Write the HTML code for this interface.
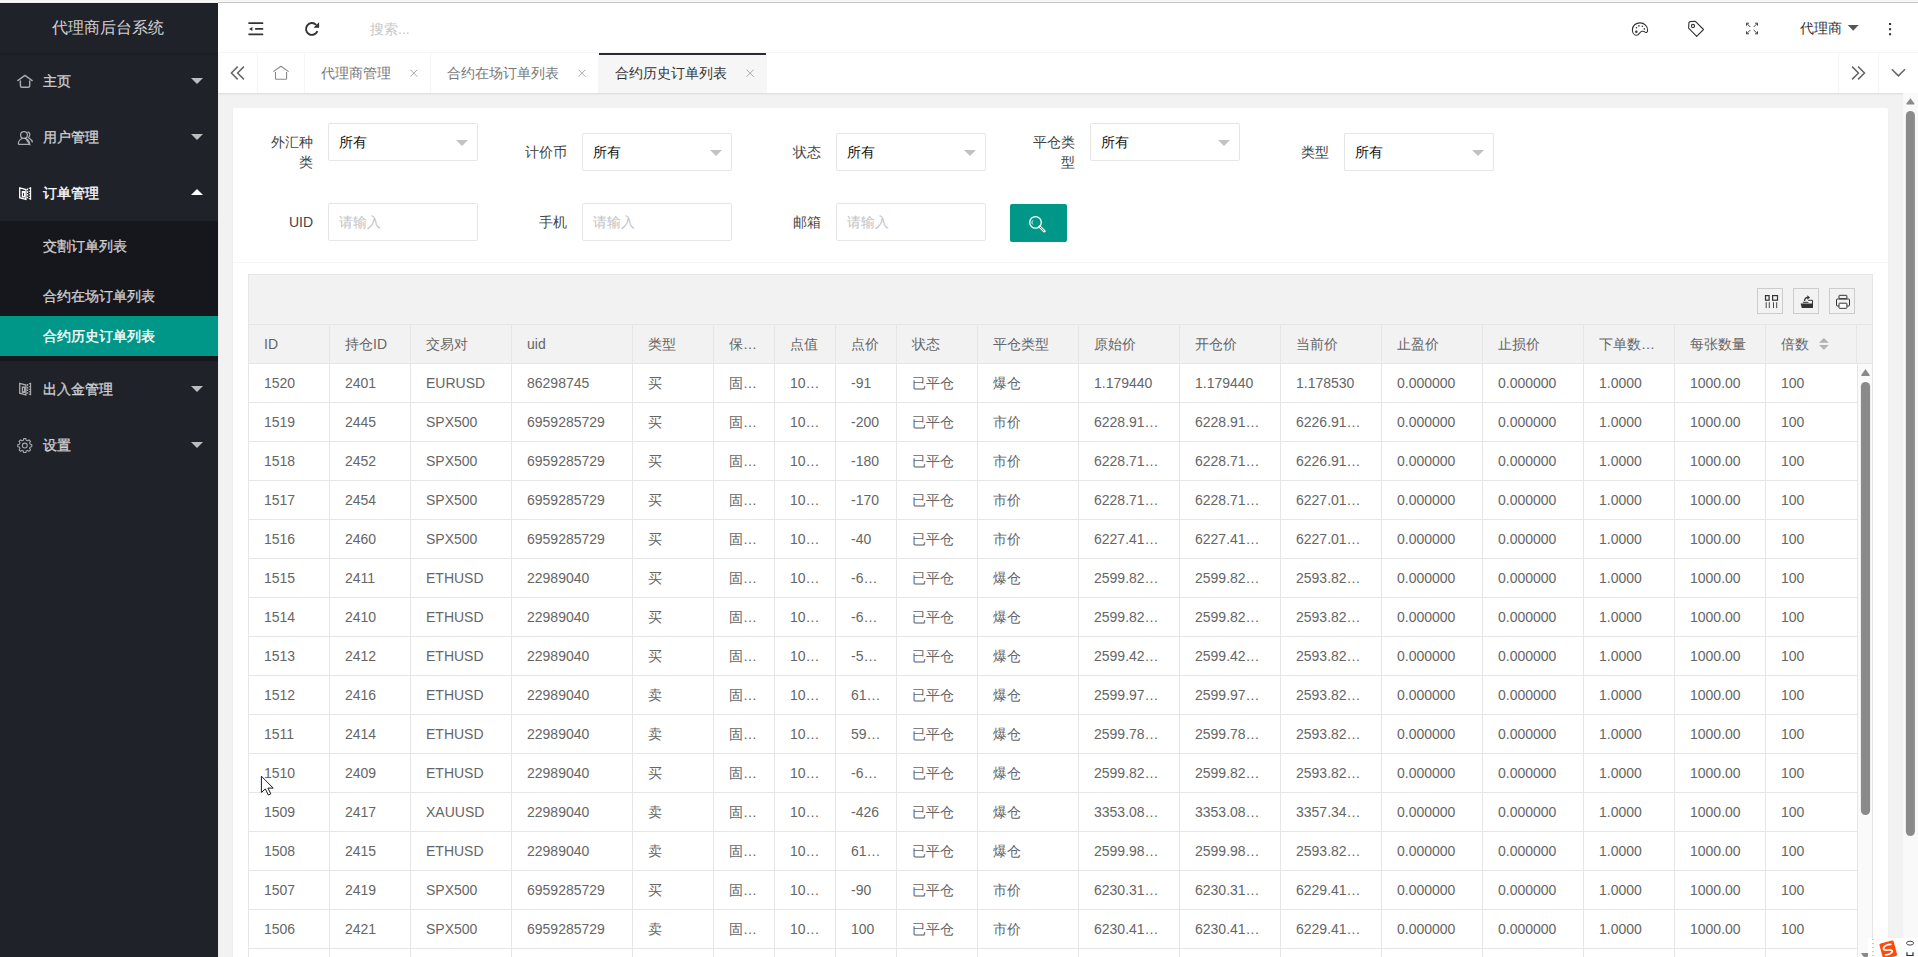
<!DOCTYPE html>
<html><head><meta charset="utf-8"><title>代理商后台系统</title>
<style>
*{box-sizing:border-box;margin:0;padding:0}
html,body{width:1918px;height:957px;overflow:hidden}
body{position:relative;background:#f2f2f2;font-family:"Liberation Sans",sans-serif;font-size:14px;color:#666}
.abs{position:absolute}
#topstrip{position:absolute;left:0;top:0;width:1918px;height:3px;background:linear-gradient(#f5f5f5 0,#f5f5f5 1px,#fafafa 1px,#fafafa 2px,#eee 2px,#eee 3px)}
#topline{position:absolute;left:218px;top:2px;width:1700px;height:1px;background:#c4c4c4}
#side{position:absolute;left:0;top:3px;width:218px;height:954px;background:#20222a;overflow:hidden}
#logo{position:absolute;left:-1px;top:0;width:218px;height:50px;line-height:50px;text-align:center;color:rgba(255,255,255,.8);font-size:16px;box-shadow:0 1px 2px 0 rgba(0,0,0,.15)}
.nav{position:absolute;left:0;width:218px;height:56px;line-height:56px;color:rgba(255,255,255,.7);font-size:14px}
.nav .t{position:absolute;left:43px;top:0;-webkit-text-stroke:.35px currentColor}
.nav.on{color:#fff}
.nav svg{position:absolute}
.caret{position:absolute;right:15px;top:25px;width:0;height:0;border-left:6px solid transparent;border-right:6px solid transparent;border-top:6px solid rgba(255,255,255,.7)}
.caret.upc{border-top:0;border-bottom:6px solid #fff;top:24px}
#sub{position:absolute;left:0;top:218px;width:218px;height:140px;background:rgba(0,0,0,.3)}
.subi{position:absolute;left:0;width:218px;height:40px;line-height:40px;color:rgba(255,255,255,.7)}
.subi .t{position:absolute;left:43px;top:0;-webkit-text-stroke:.35px currentColor}
.subi.sel{background:#009688;color:#fff}
#header{position:absolute;left:218px;top:3px;width:1700px;height:50px;background:#fff;border-bottom:1px solid #f6f6f6}
#tabs{position:absolute;left:218px;top:53px;width:1700px;height:40px;background:#fff;box-shadow:0 1px 2px 0 rgba(0,0,0,.1);z-index:2;color:#777}
.tab{position:absolute;top:0;height:40px;line-height:40px;border-right:1px solid #f6f6f6}
.tab .t{position:absolute;left:16px;top:0}
.tab .x{position:absolute;top:0;color:#999;font-size:14px}
.tab.act{background:#f6f6f6;color:#333}
.tab.act:after{content:"";position:absolute;left:0;top:0;width:100%;height:2px;background:#292b34}
#content{position:absolute;left:218px;top:93px;width:1685px;height:864px;background:#f2f2f2}
#vscroll{position:absolute;left:1903px;top:93px;width:15px;height:864px;background:#f9f9f9}
#card{position:absolute;left:233px;top:108px;width:1655px;height:860px;background:#fff;border-radius:2px;box-shadow:0 1px 2px 0 rgba(0,0,0,.05)}
#cardline{position:absolute;left:233px;top:262px;width:1655px;height:1px;background:#f6f6f6}
.lbl{position:absolute;width:65px;text-align:right;line-height:20px;color:#444}
.slct{position:absolute;width:150px;height:38px;border:1px solid #e6e6e6;background:#fff;border-radius:2px;color:#111;line-height:36px;padding-left:10px}
.slct .arr{position:absolute;right:9px;top:16px;width:0;height:0;border-left:6px solid transparent;border-right:6px solid transparent;border-top:6px solid #c2c2c2}
.inp{position:absolute;width:150px;height:38px;border:1px solid #e6e6e6;background:#fff;border-radius:2px;color:#c2c2c2;line-height:36px;padding-left:10px}
#sbtn{position:absolute;left:1010px;top:204px;width:57px;height:38px;background:#009688;border-radius:2px}
#tbl{position:absolute;left:248px;top:274px;width:1625px;height:700px;border:1px solid #e6e6e6;background:#fff;overflow:hidden}
#tool{position:absolute;left:0;top:0;width:1623px;height:50px;background:#f2f2f2;border-bottom:1px solid #e6e6e6}
.tbtn{position:absolute;top:13px;width:26px;height:26px;border:1px solid #ccc}
#thead{position:absolute;left:0;top:50px;width:1623px;height:39px;background:#f2f2f2;border-bottom:1px solid #e6e6e6}
.th,.td{position:absolute;top:0;height:38px;line-height:38px;border-left:1px solid #e6e6e6}
.th:first-child{border-left:0}
.cell{display:block;padding:0 15px;white-space:nowrap;overflow:hidden;text-overflow:ellipsis}
.th .cell{color:#666}
#tbody{position:absolute;left:0;top:89px;width:1608px;height:700px}
.tr{position:absolute;left:0;width:1608px;height:39px;border-bottom:1px solid #e6e6e6}
.td:first-child{border-left:0}
#tscroll{position:absolute;left:1608px;top:89px;width:15px;height:700px;background:#fafafa;border-left:1px solid #e6e6e6}
#edge{position:absolute;left:218px;top:53px;width:2px;height:904px;background:linear-gradient(to right,rgba(0,0,0,.03),rgba(0,0,0,0));z-index:3}

</style></head><body>
<div id="topstrip"></div><div id="topline"></div>
<div id="side">
  <div id="logo">代理商后台系统</div>
  <div class="nav" style="top:50px"><span class="t">主页</span><i class="caret"></i></div>
  <div class="nav" style="top:106px"><span class="t">用户管理</span><i class="caret"></i></div>
  <div class="nav on" style="top:162px"><span class="t">订单管理</span><i class="caret upc"></i></div>
  <div id="sub">
    <div class="subi" style="top:5px"><span class="t">交割订单列表</span></div>
    <div class="subi" style="top:55px"><span class="t">合约在场订单列表</span></div>
    <div class="subi sel" style="top:95px"><span class="t">合约历史订单列表</span></div>
  </div>
  <div class="nav" style="top:358px"><span class="t">出入金管理</span><i class="caret"></i></div>
  <div class="nav" style="top:414px"><span class="t">设置</span><i class="caret"></i></div>
</div>
<div id="header">
  <span class="abs" style="left:152px;top:14px;color:#c8c8c8;line-height:24px">搜索...</span>
  <span class="abs" style="left:1582px;top:13px;color:#333;line-height:24px">代理商</span>
</div>
<div id="tabs">
  <div class="tab" style="left:0;width:40px"></div>
  <div class="tab" style="left:40px;width:47px"></div>
  <div class="tab" style="left:87px;width:126px"><span class="t">代理商管理</span></div>
  <div class="tab" style="left:213px;width:168px"><span class="t">合约在场订单列表</span></div>
  <div class="tab act" style="left:381px;width:168px"><span class="t">合约历史订单列表</span></div>
  <div class="tab" style="left:1620px;width:40px;border-left:1px solid #f6f6f6;border-right:0"></div>
  <div class="tab" style="left:1660px;width:40px;border-left:1px solid #f6f6f6;border-right:0"></div>
</div>
<div id="content"></div><div id="edge"></div>
<div id="vscroll"></div>
<div id="card"></div>
<div id="cardline"></div>
<div class="lbl" style="left:248px;top:132px">外汇种<br>类</div>
<div class="slct" style="left:328px;top:123px">所有<i class="arr"></i></div>
<div class="lbl" style="left:502px;top:142px">计价币</div>
<div class="slct" style="left:582px;top:133px">所有<i class="arr"></i></div>
<div class="lbl" style="left:756px;top:142px">状态</div>
<div class="slct" style="left:836px;top:133px">所有<i class="arr"></i></div>
<div class="lbl" style="left:1010px;top:132px">平仓类<br>型</div>
<div class="slct" style="left:1090px;top:123px">所有<i class="arr"></i></div>
<div class="lbl" style="left:1264px;top:142px">类型</div>
<div class="slct" style="left:1344px;top:133px">所有<i class="arr"></i></div>
<div class="lbl" style="left:248px;top:212px">UID</div>
<div class="inp" style="left:328px;top:203px">请输入</div>
<div class="lbl" style="left:502px;top:212px">手机</div>
<div class="inp" style="left:582px;top:203px">请输入</div>
<div class="lbl" style="left:756px;top:212px">邮箱</div>
<div class="inp" style="left:836px;top:203px">请输入</div>
<div id="sbtn"></div>
<div id="tbl">
  <div id="tool">
    <div class="tbtn" style="left:1508px"></div>
    <div class="tbtn" style="left:1544px"></div>
    <div class="tbtn" style="left:1580px"></div>
  </div>
  <div id="thead"><div class="th" style="left:0px;width:80px"><span class="cell">ID</span></div><div class="th" style="left:80px;width:81px"><span class="cell">持仓ID</span></div><div class="th" style="left:161px;width:101px"><span class="cell">交易对</span></div><div class="th" style="left:262px;width:121px"><span class="cell">uid</span></div><div class="th" style="left:383px;width:81px"><span class="cell">类型</span></div><div class="th" style="left:464px;width:61px"><span class="cell">保证金类型</span></div><div class="th" style="left:525px;width:61px"><span class="cell">点值</span></div><div class="th" style="left:586px;width:61px"><span class="cell">点价</span></div><div class="th" style="left:647px;width:81px"><span class="cell">状态</span></div><div class="th" style="left:728px;width:101px"><span class="cell">平仓类型</span></div><div class="th" style="left:829px;width:101px"><span class="cell">原始价</span></div><div class="th" style="left:930px;width:101px"><span class="cell">开仓价</span></div><div class="th" style="left:1031px;width:101px"><span class="cell">当前价</span></div><div class="th" style="left:1132px;width:101px"><span class="cell">止盈价</span></div><div class="th" style="left:1233px;width:101px"><span class="cell">止损价</span></div><div class="th" style="left:1334px;width:91px"><span class="cell">下单数量(张)</span></div><div class="th" style="left:1425px;width:91px"><span class="cell">每张数量</span></div><div class="th" style="left:1516px;width:91px"><span class="cell">倍数</span><span class="sort"><i class="up"></i><i class="dn"></i></span></div><div class="th" style="left:1607px;width:16px"></div></div>
  <div id="tbody"><div class="tr" style="top:0px"><div class="td" style="left:0px;width:80px"><span class="cell">1520</span></div><div class="td" style="left:80px;width:81px"><span class="cell">2401</span></div><div class="td" style="left:161px;width:101px"><span class="cell">EURUSD</span></div><div class="td" style="left:262px;width:121px"><span class="cell">86298745</span></div><div class="td" style="left:383px;width:81px"><span class="cell">买</span></div><div class="td" style="left:464px;width:61px"><span class="cell">固定保证金</span></div><div class="td" style="left:525px;width:61px"><span class="cell">1000</span></div><div class="td" style="left:586px;width:61px"><span class="cell">-91</span></div><div class="td" style="left:647px;width:81px"><span class="cell">已平仓</span></div><div class="td" style="left:728px;width:101px"><span class="cell">爆仓</span></div><div class="td" style="left:829px;width:101px"><span class="cell">1.179440</span></div><div class="td" style="left:930px;width:101px"><span class="cell">1.179440</span></div><div class="td" style="left:1031px;width:101px"><span class="cell">1.178530</span></div><div class="td" style="left:1132px;width:101px"><span class="cell">0.000000</span></div><div class="td" style="left:1233px;width:101px"><span class="cell">0.000000</span></div><div class="td" style="left:1334px;width:91px"><span class="cell">1.0000</span></div><div class="td" style="left:1425px;width:91px"><span class="cell">1000.00</span></div><div class="td" style="left:1516px;width:91px"><span class="cell">100</span></div></div><div class="tr" style="top:39px"><div class="td" style="left:0px;width:80px"><span class="cell">1519</span></div><div class="td" style="left:80px;width:81px"><span class="cell">2445</span></div><div class="td" style="left:161px;width:101px"><span class="cell">SPX500</span></div><div class="td" style="left:262px;width:121px"><span class="cell">6959285729</span></div><div class="td" style="left:383px;width:81px"><span class="cell">买</span></div><div class="td" style="left:464px;width:61px"><span class="cell">固定保证金</span></div><div class="td" style="left:525px;width:61px"><span class="cell">1000</span></div><div class="td" style="left:586px;width:61px"><span class="cell">-200</span></div><div class="td" style="left:647px;width:81px"><span class="cell">已平仓</span></div><div class="td" style="left:728px;width:101px"><span class="cell">市价</span></div><div class="td" style="left:829px;width:101px"><span class="cell">6228.910000</span></div><div class="td" style="left:930px;width:101px"><span class="cell">6228.910000</span></div><div class="td" style="left:1031px;width:101px"><span class="cell">6226.910000</span></div><div class="td" style="left:1132px;width:101px"><span class="cell">0.000000</span></div><div class="td" style="left:1233px;width:101px"><span class="cell">0.000000</span></div><div class="td" style="left:1334px;width:91px"><span class="cell">1.0000</span></div><div class="td" style="left:1425px;width:91px"><span class="cell">1000.00</span></div><div class="td" style="left:1516px;width:91px"><span class="cell">100</span></div></div><div class="tr" style="top:78px"><div class="td" style="left:0px;width:80px"><span class="cell">1518</span></div><div class="td" style="left:80px;width:81px"><span class="cell">2452</span></div><div class="td" style="left:161px;width:101px"><span class="cell">SPX500</span></div><div class="td" style="left:262px;width:121px"><span class="cell">6959285729</span></div><div class="td" style="left:383px;width:81px"><span class="cell">买</span></div><div class="td" style="left:464px;width:61px"><span class="cell">固定保证金</span></div><div class="td" style="left:525px;width:61px"><span class="cell">1000</span></div><div class="td" style="left:586px;width:61px"><span class="cell">-180</span></div><div class="td" style="left:647px;width:81px"><span class="cell">已平仓</span></div><div class="td" style="left:728px;width:101px"><span class="cell">市价</span></div><div class="td" style="left:829px;width:101px"><span class="cell">6228.710000</span></div><div class="td" style="left:930px;width:101px"><span class="cell">6228.710000</span></div><div class="td" style="left:1031px;width:101px"><span class="cell">6226.910000</span></div><div class="td" style="left:1132px;width:101px"><span class="cell">0.000000</span></div><div class="td" style="left:1233px;width:101px"><span class="cell">0.000000</span></div><div class="td" style="left:1334px;width:91px"><span class="cell">1.0000</span></div><div class="td" style="left:1425px;width:91px"><span class="cell">1000.00</span></div><div class="td" style="left:1516px;width:91px"><span class="cell">100</span></div></div><div class="tr" style="top:117px"><div class="td" style="left:0px;width:80px"><span class="cell">1517</span></div><div class="td" style="left:80px;width:81px"><span class="cell">2454</span></div><div class="td" style="left:161px;width:101px"><span class="cell">SPX500</span></div><div class="td" style="left:262px;width:121px"><span class="cell">6959285729</span></div><div class="td" style="left:383px;width:81px"><span class="cell">买</span></div><div class="td" style="left:464px;width:61px"><span class="cell">固定保证金</span></div><div class="td" style="left:525px;width:61px"><span class="cell">1000</span></div><div class="td" style="left:586px;width:61px"><span class="cell">-170</span></div><div class="td" style="left:647px;width:81px"><span class="cell">已平仓</span></div><div class="td" style="left:728px;width:101px"><span class="cell">市价</span></div><div class="td" style="left:829px;width:101px"><span class="cell">6228.710000</span></div><div class="td" style="left:930px;width:101px"><span class="cell">6228.710000</span></div><div class="td" style="left:1031px;width:101px"><span class="cell">6227.010000</span></div><div class="td" style="left:1132px;width:101px"><span class="cell">0.000000</span></div><div class="td" style="left:1233px;width:101px"><span class="cell">0.000000</span></div><div class="td" style="left:1334px;width:91px"><span class="cell">1.0000</span></div><div class="td" style="left:1425px;width:91px"><span class="cell">1000.00</span></div><div class="td" style="left:1516px;width:91px"><span class="cell">100</span></div></div><div class="tr" style="top:156px"><div class="td" style="left:0px;width:80px"><span class="cell">1516</span></div><div class="td" style="left:80px;width:81px"><span class="cell">2460</span></div><div class="td" style="left:161px;width:101px"><span class="cell">SPX500</span></div><div class="td" style="left:262px;width:121px"><span class="cell">6959285729</span></div><div class="td" style="left:383px;width:81px"><span class="cell">买</span></div><div class="td" style="left:464px;width:61px"><span class="cell">固定保证金</span></div><div class="td" style="left:525px;width:61px"><span class="cell">1000</span></div><div class="td" style="left:586px;width:61px"><span class="cell">-40</span></div><div class="td" style="left:647px;width:81px"><span class="cell">已平仓</span></div><div class="td" style="left:728px;width:101px"><span class="cell">市价</span></div><div class="td" style="left:829px;width:101px"><span class="cell">6227.410000</span></div><div class="td" style="left:930px;width:101px"><span class="cell">6227.410000</span></div><div class="td" style="left:1031px;width:101px"><span class="cell">6227.010000</span></div><div class="td" style="left:1132px;width:101px"><span class="cell">0.000000</span></div><div class="td" style="left:1233px;width:101px"><span class="cell">0.000000</span></div><div class="td" style="left:1334px;width:91px"><span class="cell">1.0000</span></div><div class="td" style="left:1425px;width:91px"><span class="cell">1000.00</span></div><div class="td" style="left:1516px;width:91px"><span class="cell">100</span></div></div><div class="tr" style="top:195px"><div class="td" style="left:0px;width:80px"><span class="cell">1515</span></div><div class="td" style="left:80px;width:81px"><span class="cell">2411</span></div><div class="td" style="left:161px;width:101px"><span class="cell">ETHUSD</span></div><div class="td" style="left:262px;width:121px"><span class="cell">22989040</span></div><div class="td" style="left:383px;width:81px"><span class="cell">买</span></div><div class="td" style="left:464px;width:61px"><span class="cell">固定保证金</span></div><div class="td" style="left:525px;width:61px"><span class="cell">1000</span></div><div class="td" style="left:586px;width:61px"><span class="cell">-6000</span></div><div class="td" style="left:647px;width:81px"><span class="cell">已平仓</span></div><div class="td" style="left:728px;width:101px"><span class="cell">爆仓</span></div><div class="td" style="left:829px;width:101px"><span class="cell">2599.820000</span></div><div class="td" style="left:930px;width:101px"><span class="cell">2599.820000</span></div><div class="td" style="left:1031px;width:101px"><span class="cell">2593.820000</span></div><div class="td" style="left:1132px;width:101px"><span class="cell">0.000000</span></div><div class="td" style="left:1233px;width:101px"><span class="cell">0.000000</span></div><div class="td" style="left:1334px;width:91px"><span class="cell">1.0000</span></div><div class="td" style="left:1425px;width:91px"><span class="cell">1000.00</span></div><div class="td" style="left:1516px;width:91px"><span class="cell">100</span></div></div><div class="tr" style="top:234px"><div class="td" style="left:0px;width:80px"><span class="cell">1514</span></div><div class="td" style="left:80px;width:81px"><span class="cell">2410</span></div><div class="td" style="left:161px;width:101px"><span class="cell">ETHUSD</span></div><div class="td" style="left:262px;width:121px"><span class="cell">22989040</span></div><div class="td" style="left:383px;width:81px"><span class="cell">买</span></div><div class="td" style="left:464px;width:61px"><span class="cell">固定保证金</span></div><div class="td" style="left:525px;width:61px"><span class="cell">1000</span></div><div class="td" style="left:586px;width:61px"><span class="cell">-6000</span></div><div class="td" style="left:647px;width:81px"><span class="cell">已平仓</span></div><div class="td" style="left:728px;width:101px"><span class="cell">爆仓</span></div><div class="td" style="left:829px;width:101px"><span class="cell">2599.820000</span></div><div class="td" style="left:930px;width:101px"><span class="cell">2599.820000</span></div><div class="td" style="left:1031px;width:101px"><span class="cell">2593.820000</span></div><div class="td" style="left:1132px;width:101px"><span class="cell">0.000000</span></div><div class="td" style="left:1233px;width:101px"><span class="cell">0.000000</span></div><div class="td" style="left:1334px;width:91px"><span class="cell">1.0000</span></div><div class="td" style="left:1425px;width:91px"><span class="cell">1000.00</span></div><div class="td" style="left:1516px;width:91px"><span class="cell">100</span></div></div><div class="tr" style="top:273px"><div class="td" style="left:0px;width:80px"><span class="cell">1513</span></div><div class="td" style="left:80px;width:81px"><span class="cell">2412</span></div><div class="td" style="left:161px;width:101px"><span class="cell">ETHUSD</span></div><div class="td" style="left:262px;width:121px"><span class="cell">22989040</span></div><div class="td" style="left:383px;width:81px"><span class="cell">买</span></div><div class="td" style="left:464px;width:61px"><span class="cell">固定保证金</span></div><div class="td" style="left:525px;width:61px"><span class="cell">1000</span></div><div class="td" style="left:586px;width:61px"><span class="cell">-5600</span></div><div class="td" style="left:647px;width:81px"><span class="cell">已平仓</span></div><div class="td" style="left:728px;width:101px"><span class="cell">爆仓</span></div><div class="td" style="left:829px;width:101px"><span class="cell">2599.420000</span></div><div class="td" style="left:930px;width:101px"><span class="cell">2599.420000</span></div><div class="td" style="left:1031px;width:101px"><span class="cell">2593.820000</span></div><div class="td" style="left:1132px;width:101px"><span class="cell">0.000000</span></div><div class="td" style="left:1233px;width:101px"><span class="cell">0.000000</span></div><div class="td" style="left:1334px;width:91px"><span class="cell">1.0000</span></div><div class="td" style="left:1425px;width:91px"><span class="cell">1000.00</span></div><div class="td" style="left:1516px;width:91px"><span class="cell">100</span></div></div><div class="tr" style="top:312px"><div class="td" style="left:0px;width:80px"><span class="cell">1512</span></div><div class="td" style="left:80px;width:81px"><span class="cell">2416</span></div><div class="td" style="left:161px;width:101px"><span class="cell">ETHUSD</span></div><div class="td" style="left:262px;width:121px"><span class="cell">22989040</span></div><div class="td" style="left:383px;width:81px"><span class="cell">卖</span></div><div class="td" style="left:464px;width:61px"><span class="cell">固定保证金</span></div><div class="td" style="left:525px;width:61px"><span class="cell">1000</span></div><div class="td" style="left:586px;width:61px"><span class="cell">6150</span></div><div class="td" style="left:647px;width:81px"><span class="cell">已平仓</span></div><div class="td" style="left:728px;width:101px"><span class="cell">爆仓</span></div><div class="td" style="left:829px;width:101px"><span class="cell">2599.970000</span></div><div class="td" style="left:930px;width:101px"><span class="cell">2599.970000</span></div><div class="td" style="left:1031px;width:101px"><span class="cell">2593.820000</span></div><div class="td" style="left:1132px;width:101px"><span class="cell">0.000000</span></div><div class="td" style="left:1233px;width:101px"><span class="cell">0.000000</span></div><div class="td" style="left:1334px;width:91px"><span class="cell">1.0000</span></div><div class="td" style="left:1425px;width:91px"><span class="cell">1000.00</span></div><div class="td" style="left:1516px;width:91px"><span class="cell">100</span></div></div><div class="tr" style="top:351px"><div class="td" style="left:0px;width:80px"><span class="cell">1511</span></div><div class="td" style="left:80px;width:81px"><span class="cell">2414</span></div><div class="td" style="left:161px;width:101px"><span class="cell">ETHUSD</span></div><div class="td" style="left:262px;width:121px"><span class="cell">22989040</span></div><div class="td" style="left:383px;width:81px"><span class="cell">卖</span></div><div class="td" style="left:464px;width:61px"><span class="cell">固定保证金</span></div><div class="td" style="left:525px;width:61px"><span class="cell">1000</span></div><div class="td" style="left:586px;width:61px"><span class="cell">5960</span></div><div class="td" style="left:647px;width:81px"><span class="cell">已平仓</span></div><div class="td" style="left:728px;width:101px"><span class="cell">爆仓</span></div><div class="td" style="left:829px;width:101px"><span class="cell">2599.780000</span></div><div class="td" style="left:930px;width:101px"><span class="cell">2599.780000</span></div><div class="td" style="left:1031px;width:101px"><span class="cell">2593.820000</span></div><div class="td" style="left:1132px;width:101px"><span class="cell">0.000000</span></div><div class="td" style="left:1233px;width:101px"><span class="cell">0.000000</span></div><div class="td" style="left:1334px;width:91px"><span class="cell">1.0000</span></div><div class="td" style="left:1425px;width:91px"><span class="cell">1000.00</span></div><div class="td" style="left:1516px;width:91px"><span class="cell">100</span></div></div><div class="tr" style="top:390px"><div class="td" style="left:0px;width:80px"><span class="cell">1510</span></div><div class="td" style="left:80px;width:81px"><span class="cell">2409</span></div><div class="td" style="left:161px;width:101px"><span class="cell">ETHUSD</span></div><div class="td" style="left:262px;width:121px"><span class="cell">22989040</span></div><div class="td" style="left:383px;width:81px"><span class="cell">买</span></div><div class="td" style="left:464px;width:61px"><span class="cell">固定保证金</span></div><div class="td" style="left:525px;width:61px"><span class="cell">1000</span></div><div class="td" style="left:586px;width:61px"><span class="cell">-6000</span></div><div class="td" style="left:647px;width:81px"><span class="cell">已平仓</span></div><div class="td" style="left:728px;width:101px"><span class="cell">爆仓</span></div><div class="td" style="left:829px;width:101px"><span class="cell">2599.820000</span></div><div class="td" style="left:930px;width:101px"><span class="cell">2599.820000</span></div><div class="td" style="left:1031px;width:101px"><span class="cell">2593.820000</span></div><div class="td" style="left:1132px;width:101px"><span class="cell">0.000000</span></div><div class="td" style="left:1233px;width:101px"><span class="cell">0.000000</span></div><div class="td" style="left:1334px;width:91px"><span class="cell">1.0000</span></div><div class="td" style="left:1425px;width:91px"><span class="cell">1000.00</span></div><div class="td" style="left:1516px;width:91px"><span class="cell">100</span></div></div><div class="tr" style="top:429px"><div class="td" style="left:0px;width:80px"><span class="cell">1509</span></div><div class="td" style="left:80px;width:81px"><span class="cell">2417</span></div><div class="td" style="left:161px;width:101px"><span class="cell">XAUUSD</span></div><div class="td" style="left:262px;width:121px"><span class="cell">22989040</span></div><div class="td" style="left:383px;width:81px"><span class="cell">卖</span></div><div class="td" style="left:464px;width:61px"><span class="cell">固定保证金</span></div><div class="td" style="left:525px;width:61px"><span class="cell">1000</span></div><div class="td" style="left:586px;width:61px"><span class="cell">-426</span></div><div class="td" style="left:647px;width:81px"><span class="cell">已平仓</span></div><div class="td" style="left:728px;width:101px"><span class="cell">爆仓</span></div><div class="td" style="left:829px;width:101px"><span class="cell">3353.080000</span></div><div class="td" style="left:930px;width:101px"><span class="cell">3353.080000</span></div><div class="td" style="left:1031px;width:101px"><span class="cell">3357.340000</span></div><div class="td" style="left:1132px;width:101px"><span class="cell">0.000000</span></div><div class="td" style="left:1233px;width:101px"><span class="cell">0.000000</span></div><div class="td" style="left:1334px;width:91px"><span class="cell">1.0000</span></div><div class="td" style="left:1425px;width:91px"><span class="cell">1000.00</span></div><div class="td" style="left:1516px;width:91px"><span class="cell">100</span></div></div><div class="tr" style="top:468px"><div class="td" style="left:0px;width:80px"><span class="cell">1508</span></div><div class="td" style="left:80px;width:81px"><span class="cell">2415</span></div><div class="td" style="left:161px;width:101px"><span class="cell">ETHUSD</span></div><div class="td" style="left:262px;width:121px"><span class="cell">22989040</span></div><div class="td" style="left:383px;width:81px"><span class="cell">卖</span></div><div class="td" style="left:464px;width:61px"><span class="cell">固定保证金</span></div><div class="td" style="left:525px;width:61px"><span class="cell">1000</span></div><div class="td" style="left:586px;width:61px"><span class="cell">6160</span></div><div class="td" style="left:647px;width:81px"><span class="cell">已平仓</span></div><div class="td" style="left:728px;width:101px"><span class="cell">爆仓</span></div><div class="td" style="left:829px;width:101px"><span class="cell">2599.980000</span></div><div class="td" style="left:930px;width:101px"><span class="cell">2599.980000</span></div><div class="td" style="left:1031px;width:101px"><span class="cell">2593.820000</span></div><div class="td" style="left:1132px;width:101px"><span class="cell">0.000000</span></div><div class="td" style="left:1233px;width:101px"><span class="cell">0.000000</span></div><div class="td" style="left:1334px;width:91px"><span class="cell">1.0000</span></div><div class="td" style="left:1425px;width:91px"><span class="cell">1000.00</span></div><div class="td" style="left:1516px;width:91px"><span class="cell">100</span></div></div><div class="tr" style="top:507px"><div class="td" style="left:0px;width:80px"><span class="cell">1507</span></div><div class="td" style="left:80px;width:81px"><span class="cell">2419</span></div><div class="td" style="left:161px;width:101px"><span class="cell">SPX500</span></div><div class="td" style="left:262px;width:121px"><span class="cell">6959285729</span></div><div class="td" style="left:383px;width:81px"><span class="cell">买</span></div><div class="td" style="left:464px;width:61px"><span class="cell">固定保证金</span></div><div class="td" style="left:525px;width:61px"><span class="cell">1000</span></div><div class="td" style="left:586px;width:61px"><span class="cell">-90</span></div><div class="td" style="left:647px;width:81px"><span class="cell">已平仓</span></div><div class="td" style="left:728px;width:101px"><span class="cell">市价</span></div><div class="td" style="left:829px;width:101px"><span class="cell">6230.310000</span></div><div class="td" style="left:930px;width:101px"><span class="cell">6230.310000</span></div><div class="td" style="left:1031px;width:101px"><span class="cell">6229.410000</span></div><div class="td" style="left:1132px;width:101px"><span class="cell">0.000000</span></div><div class="td" style="left:1233px;width:101px"><span class="cell">0.000000</span></div><div class="td" style="left:1334px;width:91px"><span class="cell">1.0000</span></div><div class="td" style="left:1425px;width:91px"><span class="cell">1000.00</span></div><div class="td" style="left:1516px;width:91px"><span class="cell">100</span></div></div><div class="tr" style="top:546px"><div class="td" style="left:0px;width:80px"><span class="cell">1506</span></div><div class="td" style="left:80px;width:81px"><span class="cell">2421</span></div><div class="td" style="left:161px;width:101px"><span class="cell">SPX500</span></div><div class="td" style="left:262px;width:121px"><span class="cell">6959285729</span></div><div class="td" style="left:383px;width:81px"><span class="cell">卖</span></div><div class="td" style="left:464px;width:61px"><span class="cell">固定保证金</span></div><div class="td" style="left:525px;width:61px"><span class="cell">1000</span></div><div class="td" style="left:586px;width:61px"><span class="cell">100</span></div><div class="td" style="left:647px;width:81px"><span class="cell">已平仓</span></div><div class="td" style="left:728px;width:101px"><span class="cell">市价</span></div><div class="td" style="left:829px;width:101px"><span class="cell">6230.410000</span></div><div class="td" style="left:930px;width:101px"><span class="cell">6230.410000</span></div><div class="td" style="left:1031px;width:101px"><span class="cell">6229.410000</span></div><div class="td" style="left:1132px;width:101px"><span class="cell">0.000000</span></div><div class="td" style="left:1233px;width:101px"><span class="cell">0.000000</span></div><div class="td" style="left:1334px;width:91px"><span class="cell">1.0000</span></div><div class="td" style="left:1425px;width:91px"><span class="cell">1000.00</span></div><div class="td" style="left:1516px;width:91px"><span class="cell">100</span></div></div><div class="tr" style="top:585px"><div class="td" style="left:0px;width:80px"><span class="cell">1505</span></div><div class="td" style="left:80px;width:81px"><span class="cell">2420</span></div><div class="td" style="left:161px;width:101px"><span class="cell">SPX500</span></div><div class="td" style="left:262px;width:121px"><span class="cell">6959285729</span></div><div class="td" style="left:383px;width:81px"><span class="cell">卖</span></div><div class="td" style="left:464px;width:61px"><span class="cell">固定保证金</span></div><div class="td" style="left:525px;width:61px"><span class="cell">1000</span></div><div class="td" style="left:586px;width:61px"><span class="cell">100</span></div><div class="td" style="left:647px;width:81px"><span class="cell">已平仓</span></div><div class="td" style="left:728px;width:101px"><span class="cell">市价</span></div><div class="td" style="left:829px;width:101px"><span class="cell">6230.410000</span></div><div class="td" style="left:930px;width:101px"><span class="cell">6230.410000</span></div><div class="td" style="left:1031px;width:101px"><span class="cell">6229.410000</span></div><div class="td" style="left:1132px;width:101px"><span class="cell">0.000000</span></div><div class="td" style="left:1233px;width:101px"><span class="cell">0.000000</span></div><div class="td" style="left:1334px;width:91px"><span class="cell">1.0000</span></div><div class="td" style="left:1425px;width:91px"><span class="cell">1000.00</span></div><div class="td" style="left:1516px;width:91px"><span class="cell">100</span></div></div></div>
  <div id="tscroll"></div>
</div>
<svg id="ov" width="1918" height="957" viewBox="0 0 1918 957" style="position:absolute;left:0;top:0;z-index:10">
<!-- sidebar home -->
<g fill="none" stroke="rgba(255,255,255,.62)" stroke-width="1.4" stroke-linejoin="round" stroke-linecap="round">
  <path d="M17.8,80.6 L24.9,75.4 L32.2,80.6"/>
  <path d="M20.4,81 V85.8 Q20.4,87.3 21.9,87.3 H28.2 Q29.7,87.3 29.7,85.8 V81"/>
</g>
<!-- sidebar user -->
<g fill="none" stroke="rgba(255,255,255,.62)" stroke-width="1.3">
  <circle cx="24" cy="135" r="3.4"/>
  <path d="M18.3,144.3 C18.3,141 20.5,138.9 22.3,138.6 M25.7,138.6 C27.5,138.9 29.7,141 29.7,144.3 Z M18.3,144.3 H29.7"/>
  <path d="M27.6,132 C29.6,132.2 30.3,134.2 29.3,136.3 C28.9,137.2 28.6,137.6 28.6,137.8 C30.6,138.9 32.2,140.5 32.5,142.4"/>
</g>
<!-- sidebar book (订单管理 white) -->
<g fill="none" stroke="#fff" stroke-width="1.3">
  <path d="M19.7,187.8 L25.9,189.5 V199.3 L19.7,197.7 Z"/>
  <rect x="22.4" y="191.6" width="2.2" height="5.2" />
  <path d="M27.5,188.6 V199.2" stroke-dasharray="1.6 1.1"/>
  <path d="M28.8,188.6 L30.6,187.9 V199.3 L28.8,198.6 M28.8,191.2 H30.6 M28.8,193.8 H30.6 M28.8,196.3 H30.6" stroke-width="1.1"/>
</g>
<g fill="none" stroke="rgba(255,255,255,.62)" stroke-width="1.3" transform="translate(0,195.5)">
  <path d="M19.7,187.8 L25.9,189.5 V199.3 L19.7,197.7 Z"/>
  <rect x="22.4" y="191.6" width="2.2" height="5.2" />
  <path d="M27.5,188.6 V199.2" stroke-dasharray="1.6 1.1"/>
  <path d="M28.8,188.6 L30.6,187.9 V199.3 L28.8,198.6 M28.8,191.2 H30.6 M28.8,193.8 H30.6 M28.8,196.3 H30.6" stroke-width="1.1"/>
</g>
<!-- gear -->
<g fill="none" stroke="rgba(255,255,255,.62)" stroke-width="1.3" stroke-linejoin="round" transform="translate(24.8,445.6) scale(0.84) translate(-24.9,-446.6)">
  <path id="gearp" d="M23.6,438.3 H26.2 L26.6,440.2 L28.2,440.9 L29.9,439.8 L31.7,441.6 L30.6,443.3 L31.3,444.9 L33.2,445.3 V447.9 L31.3,448.3 L30.6,449.9 L31.7,451.6 L29.9,453.4 L28.2,452.3 L26.6,453 L26.2,454.9 H23.6 L23.2,453 L21.6,452.3 L19.9,453.4 L18.1,451.6 L19.2,449.9 L18.5,448.3 L16.6,447.9 V445.3 L18.5,444.9 L19.2,443.3 L18.1,441.6 L19.9,439.8 L21.6,440.9 L23.2,440.2 Z"/>
  <circle cx="24.9" cy="446.6" r="2.9"/>
</g>
<!-- header shrink -->
<g fill="#333">
  <rect x="248.3" y="22.3" width="15" height="1.7" rx=".6"/>
  <rect x="255" y="28.1" width="8.3" height="1.7" rx=".6"/>
  <rect x="248.3" y="33.5" width="15" height="1.7" rx=".6"/>
  <path d="M249,29 L252.4,26.9 V31.1 Z"/>
</g>
<!-- refresh -->
<g fill="none" stroke="#333" stroke-width="1.9">
  <path d="M317.4,31.1 A5.9,5.9 0 1 1 316.2,24.9"/>
</g>
<path d="M319.1,22.2 V27.8 H313.4 Z" fill="#333"/>
<!-- palette -->
<g fill="none" stroke="#333" stroke-width="1.1">
  <path d="M1636.5,35.3 C1633.8,35.3 1632.4,32.4 1632.4,29.8 C1632.4,25.6 1635.8,22.9 1640,22.9 C1644.6,22.9 1647.6,26.2 1647.6,30.1 C1647.6,32.6 1646.4,32.9 1645.2,32.1 C1644.2,31.4 1643.2,31 1641.8,31.3 C1639.8,31.9 1639,35.3 1636.5,35.3 Z"/>
</g>
<g fill="#333">
  <circle cx="1636.3" cy="31.7" r="1.25"/>
  <circle cx="1636.5" cy="27.8" r=".8"/>
  <circle cx="1638.9" cy="25.9" r=".8"/>
  <circle cx="1642.4" cy="26.3" r=".8"/>
  <circle cx="1644.4" cy="28.9" r=".8"/>
</g>
<!-- tag -->
<g fill="none" stroke="#333" stroke-width="1.1" stroke-linejoin="round">
  <path d="M1688.9,22.6 L1689.9,21.6 L1695.4,21.3 L1703.5,29.5 L1696.7,36.3 L1688.6,28.2 Z"/>
  <circle cx="1693" cy="26" r="1.6"/>
</g>
<!-- fullscreen -->
<g fill="none" stroke="#444" stroke-width="1">
  <path d="M1746.5,23.2 L1750.3,27 M1746.5,23.2 H1749 M1746.5,23.2 V25.7"/>
  <path d="M1757.5,23.2 L1753.7,27 M1757.5,23.2 H1755 M1757.5,23.2 V25.7"/>
  <path d="M1746.5,33.8 L1750.3,30 M1746.5,33.8 H1749 M1746.5,33.8 V31.3"/>
  <path d="M1757.5,33.8 L1753.7,30 M1757.5,33.8 H1755 M1757.5,33.8 V31.3"/>
</g>
<!-- user caret -->
<path d="M1847.8,25.1 H1858.6 L1853.2,30.7 Z" fill="#555"/>
<!-- more dots -->
<g fill="#333">
  <rect x="1889" y="23" width="2.1" height="2"/>
  <rect x="1889" y="28.2" width="2.1" height="2"/>
  <rect x="1889" y="33.2" width="2.1" height="2"/>
</g>
<!-- tabs « -->
<g fill="none" stroke="#666" stroke-width="1.5">
  <path d="M237.7,66.6 L231.4,73 L237.7,79.4"/>
  <path d="M243.9,66.6 L237.6,73 L243.9,79.4"/>
</g>
<!-- tabs home -->
<g fill="none" stroke="#888" stroke-width="1.1" stroke-linejoin="round">
  <path d="M273.3,71.6 L280.9,66.2 L288.6,71.6"/>
  <path d="M275.5,72 V78.6 Q275.5,79.3 276.3,79.3 H285.8 Q286.6,79.3 286.6,78.6 V72"/>
</g>
<!-- tabs » -->
<g fill="none" stroke="#666" stroke-width="1.5">
  <path d="M1852.1,66.6 L1858.5,73 L1852.1,79.4"/>
  <path d="M1858.1,66.6 L1864.5,73 L1858.1,79.4"/>
</g>
<!-- tabs ∨ -->
<path d="M1891.8,69.2 L1898.4,75.9 L1905,69.2" fill="none" stroke="#666" stroke-width="1.5"/>
<!-- search btn icon -->
<g fill="none" stroke="#fff" stroke-width="1.3">
  <circle cx="1035.5" cy="222.4" r="5.8"/>
  <path d="M1032.9,220.4 A2.6,2.6 0 0 0 1032.9,224.4" stroke-width="1"/>
  <path d="M1039.6,226.6 L1044.4,231.2" stroke-width="2.6" stroke-linecap="round"/>
</g>
<path d="M1040.1,227.1 L1043.9,230.7" fill="none" stroke="#009688" stroke-width=".9" stroke-linecap="round"/>
<!-- toolbar icons -->
<g fill="none" stroke="#333" stroke-width="1.2">
  <rect x="1765.5" y="295.6" width="3.6" height="4.6"/>
  <rect x="1772.6" y="295.6" width="4.9" height="4.6"/>
</g>
<path d="M1766.2,302.2 V308.1 M1769.3,302.2 V308.1 M1773.5,302.2 V308.1 M1776.7,302.2 V308.1" fill="none" stroke="#333" stroke-width=".9"/>
<g fill="none" stroke="#333" stroke-width="1">
  <path d="M1808.2,300.3 H1812.5 V307.6"/>
  <path d="M1802.9,302.3 H1808.4"/>
  <path d="M1804.6,301 C1804.6,298.8 1806,297.4 1808.3,297.4" stroke-width="1.3"/>
</g>
<path d="M1807.3,295.2 L1810,297.4 L1807.3,299.8 Z" fill="#333"/>
<path d="M1800.6,303.5 H1812.8 V308 H1801.8 Z" fill="#333"/>
<g fill="none" stroke="#333" stroke-width="1">
  <rect x="1839" y="295.3" width="7.9" height="3.4" rx=".5"/>
  <path d="M1838.8,306 H1837.2 Q1836.5,306 1836.5,305.3 V299.7 Q1836.5,299 1837.2,299 H1848.8 Q1849.5,299 1849.5,299.7 V305.3 Q1849.5,306 1848.8,306 H1847.1"/>
  <rect x="1839" y="303.2" width="7.9" height="5.1" rx=".5" fill="#fff"/>
</g>
<!-- sort -->
<path d="M1823.9,338 L1828.8,342.8 H1819 Z M1819,345 H1828.8 L1823.9,349.8 Z" fill="#b2b2b2"/>
<!-- cursor -->
<path d="M261.4,776.2 V792.4 L265.4,788.9 L268.3,795 L270.8,793.9 L268,788.1 L273.2,788.1 Z" fill="#fff" stroke="#111" stroke-width="0.95" stroke-linejoin="round"/>
<!-- tab close x -->
<g fill="none" stroke="#aaa" stroke-width="1">
  <path d="M410.4,69.7 L417.4,76.7 M417.4,69.7 L410.4,76.7"/>
  <path d="M578.5,69.7 L585.5,76.7 M585.5,69.7 L578.5,76.7"/>
  <path d="M746.6,69.7 L753.6,76.7 M753.6,69.7 L746.6,76.7"/>
</g>
<!-- page scrollbar -->
<rect x="1903" y="93" width="15" height="864" fill="#f9f9f9"/>
<path d="M1910.4,98.2 L1914.4,103.6 Q1914.8,104.6 1913.8,104.6 H1907 Q1906,104.6 1906.4,103.6 Z" fill="#8a8a8a"/>
<rect x="1905.9" y="111" width="9" height="725" rx="4.5" fill="#8a8a8a"/>
<!-- table scrollbar -->
<path d="M1865.5,369 L1869.7,375 Q1870.1,376 1869.1,376 H1861.9 Q1860.9,376 1861.3,375 Z" fill="#8a8a8a"/>
<rect x="1860.9" y="382" width="9.2" height="433" rx="4.6" fill="#8a8a8a"/>
<path d="M1860.9,953 H1870.1 L1865.5,959.5 Z" fill="#8a8a8a"/>
<!-- sogou -->
<rect x="1868" y="938" width="50" height="19" fill="#fff"/>
<path d="M1873,939 V957" stroke="#999" stroke-width="1" stroke-dasharray="1.2 2.8"/>
<g transform="translate(1888.2,949.5) rotate(-15)">
  <rect x="-7.3" y="-7.8" width="14.6" height="16" rx="1.6" fill="#ff4a0a"/>
  <path d="M3.8,-4.3 C1,-5 -4,-4.6 -4.4,-1.8 C-4.8,0.9 2.8,-0.2 3.4,2.2 C3.9,4.4 -0.6,5.2 -4,4.6" fill="none" stroke="#fff" stroke-width="1.7" stroke-linecap="round"/>
</g>
<path d="M1906.5,943.2 Q1906.5,941.2 1910,941.2 Q1913.6,941.2 1913.6,943.2 Q1913.6,945.1 1910,945.1 Q1906.5,945.1 1906.5,943.2 Z" fill="none" stroke="#444" stroke-width="1"/>
<path d="M1907,952.3 V955.5 H1913 V952.3" fill="none" stroke="#134" stroke-width="1.2"/>
</svg>

</body></html>
